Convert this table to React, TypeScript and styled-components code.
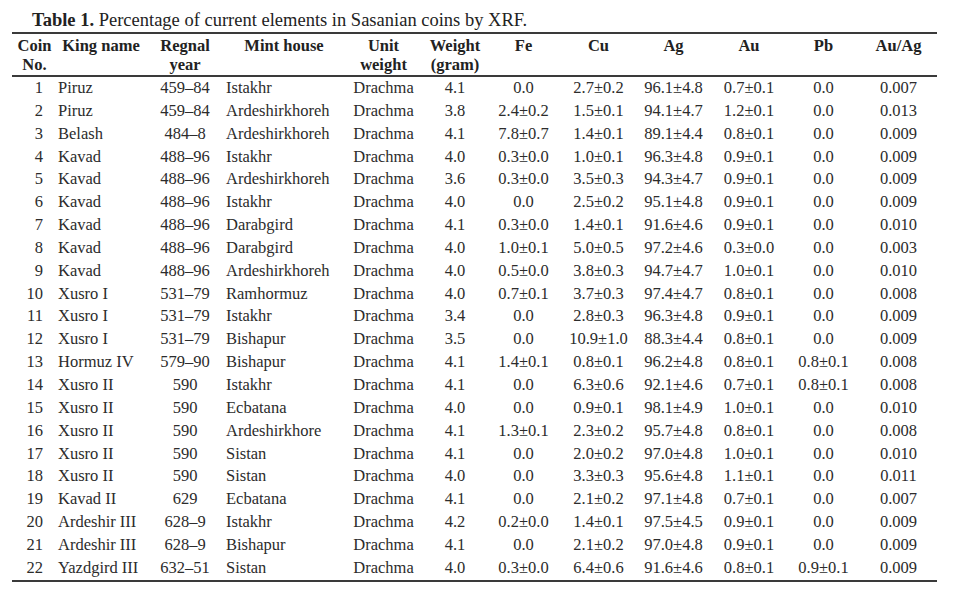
import React from "react";
import styled, { createGlobalStyle } from "styled-components";

const GlobalStyle = createGlobalStyle`
  html, body { margin: 0; padding: 0; background: #ffffff; }
  body { font-family: "Liberation Serif", "Times New Roman", serif; color: #262626; }
`;

const Page = styled.div`
  width: 964px;
  height: 602px;
  padding: 8.5px 0 0 12px;
  box-sizing: border-box;
  background: #fff;
`;

const Caption = styled.div`
  padding-left: 20px;
  font-size: 18.5px;
  line-height: 22px;
  height: 23.5px;
  color: #222;
  white-space: nowrap;
`;

const CaptionLabel = styled.b`
  font-weight: bold;
`;

const Table = styled.table`
  width: 925px;
  table-layout: fixed;
  border-collapse: separate;
  border-spacing: 0;
  font-size: 16.5px;
`;

const Col = styled.col<{ $w: number }>`
  width: ${(p) => p.$w}px;
`;

const Head = styled.th`
  font-weight: bold;
  text-align: center;
  vertical-align: top;
  line-height: 19px;
  padding: 2px 0 1px;
  border-top: 2px solid #3a3a3a;
  border-bottom: 2px solid #3a3a3a;
  white-space: nowrap;
  color: #222;
`;

const Row = styled.tr<{ $last?: boolean }>`
  & > td {
    border-bottom: ${(p) => (p.$last ? "2px solid #3a3a3a" : "none")};
  }
`;

const Cell = styled.td<{ $align?: "left" | "right" | "center"; $pad?: string }>`
  height: 21.84px;
  line-height: 21.84px;
  padding: ${(p) => p.$pad ?? "0 0 1px 0"};
  text-align: ${(p) => p.$align ?? "center"};
  white-space: nowrap;
  color: #2c2c2c;
`;

type Coin = [string, string, string, string, string, string, string, string, string, string, string, string];

const rows: Coin[] = [
  ["1", "Piruz", "459–84", "Istakhr", "Drachma", "4.1", "0.0", "2.7±0.2", "96.1±4.8", "0.7±0.1", "0.0", "0.007"],
  ["2", "Piruz", "459–84", "Ardeshirkhoreh", "Drachma", "3.8", "2.4±0.2", "1.5±0.1", "94.1±4.7", "1.2±0.1", "0.0", "0.013"],
  ["3", "Belash", "484–8", "Ardeshirkhoreh", "Drachma", "4.1", "7.8±0.7", "1.4±0.1", "89.1±4.4", "0.8±0.1", "0.0", "0.009"],
  ["4", "Kavad", "488–96", "Istakhr", "Drachma", "4.0", "0.3±0.0", "1.0±0.1", "96.3±4.8", "0.9±0.1", "0.0", "0.009"],
  ["5", "Kavad", "488–96", "Ardeshirkhoreh", "Drachma", "3.6", "0.3±0.0", "3.5±0.3", "94.3±4.7", "0.9±0.1", "0.0", "0.009"],
  ["6", "Kavad", "488–96", "Istakhr", "Drachma", "4.0", "0.0", "2.5±0.2", "95.1±4.8", "0.9±0.1", "0.0", "0.009"],
  ["7", "Kavad", "488–96", "Darabgird", "Drachma", "4.1", "0.3±0.0", "1.4±0.1", "91.6±4.6", "0.9±0.1", "0.0", "0.010"],
  ["8", "Kavad", "488–96", "Darabgird", "Drachma", "4.0", "1.0±0.1", "5.0±0.5", "97.2±4.6", "0.3±0.0", "0.0", "0.003"],
  ["9", "Kavad", "488–96", "Ardeshirkhoreh", "Drachma", "4.0", "0.5±0.0", "3.8±0.3", "94.7±4.7", "1.0±0.1", "0.0", "0.010"],
  ["10", "Xusro I", "531–79", "Ramhormuz", "Drachma", "4.0", "0.7±0.1", "3.7±0.3", "97.4±4.7", "0.8±0.1", "0.0", "0.008"],
  ["11", "Xusro I", "531–79", "Istakhr", "Drachma", "3.4", "0.0", "2.8±0.3", "96.3±4.8", "0.9±0.1", "0.0", "0.009"],
  ["12", "Xusro I", "531–79", "Bishapur", "Drachma", "3.5", "0.0", "10.9±1.0", "88.3±4.4", "0.8±0.1", "0.0", "0.009"],
  ["13", "Hormuz IV", "579–90", "Bishapur", "Drachma", "4.1", "1.4±0.1", "0.8±0.1", "96.2±4.8", "0.8±0.1", "0.8±0.1", "0.008"],
  ["14", "Xusro II", "590", "Istakhr", "Drachma", "4.1", "0.0", "6.3±0.6", "92.1±4.6", "0.7±0.1", "0.8±0.1", "0.008"],
  ["15", "Xusro II", "590", "Ecbatana", "Drachma", "4.0", "0.0", "0.9±0.1", "98.1±4.9", "1.0±0.1", "0.0", "0.010"],
  ["16", "Xusro II", "590", "Ardeshirkhore", "Drachma", "4.1", "1.3±0.1", "2.3±0.2", "95.7±4.8", "0.8±0.1", "0.0", "0.008"],
  ["17", "Xusro II", "590", "Sistan", "Drachma", "4.1", "0.0", "2.0±0.2", "97.0±4.8", "1.0±0.1", "0.0", "0.010"],
  ["18", "Xusro II", "590", "Sistan", "Drachma", "4.0", "0.0", "3.3±0.3", "95.6±4.8", "1.1±0.1", "0.0", "0.011"],
  ["19", "Kavad II", "629", "Ecbatana", "Drachma", "4.1", "0.0", "2.1±0.2", "97.1±4.8", "0.7±0.1", "0.0", "0.007"],
  ["20", "Ardeshir III", "628–9", "Istakhr", "Drachma", "4.2", "0.2±0.0", "1.4±0.1", "97.5±4.5", "0.9±0.1", "0.0", "0.009"],
  ["21", "Ardeshir III", "628–9", "Bishapur", "Drachma", "4.1", "0.0", "2.1±0.2", "97.0±4.8", "0.9±0.1", "0.0", "0.009"],
  ["22", "Yazdgird III", "632–51", "Sistan", "Drachma", "4.0", "0.3±0.0", "6.4±0.6", "91.6±4.6", "0.8±0.1", "0.9±0.1", "0.009"],
];

const widths = [45, 88, 80, 118, 81, 62, 75, 75, 75, 76, 73, 77];

const headers: React.ReactNode[] = [
  <>Coin<br />No.</>,
  <>King name</>,
  <>Regnal<br />year</>,
  <>Mint house</>,
  <>Unit<br />weight</>,
  <>Weight<br />(gram)</>,
  <>Fe</>,
  <>Cu</>,
  <>Ag</>,
  <>Au</>,
  <>Pb</>,
  <>Au/Ag</>,
];

export default function App() {
  return (
    <>
      <GlobalStyle />
      <Page>
        <Caption>
          <CaptionLabel>Table 1.</CaptionLabel> Percentage of current elements in Sasanian coins by XRF.
        </Caption>
        <Table>
          <colgroup>
            {widths.map((w, i) => (
              <Col key={i} $w={w} />
            ))}
          </colgroup>
          <thead>
            <tr>
              {headers.map((h, i) => (
                <Head key={i}>{h}</Head>
              ))}
            </tr>
          </thead>
          <tbody>
            {rows.map((r, ri) => (
              <Row key={ri} $last={ri === rows.length - 1}>
                <Cell $align="right" $pad="0 14px 1px 0">{r[0]}</Cell>
                <Cell $align="left" $pad="0 0 1px 1px">{r[1]}</Cell>
                <Cell>{r[2]}</Cell>
                <Cell $align="left" $pad="0 0 1px 1px">{r[3]}</Cell>
                {r.slice(4).map((v, ci) => (
                  <Cell key={ci}>{v}</Cell>
                ))}
              </Row>
            ))}
          </tbody>
        </Table>
      </Page>
    </>
  );
}
